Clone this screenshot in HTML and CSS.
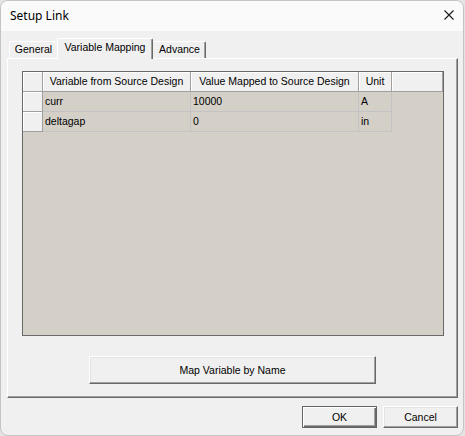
FILE: index.html
```html
<!DOCTYPE html>
<html>
<head>
<meta charset="utf-8">
<title>Setup Link</title>
<link rel="stylesheet" href="styles.css">
</head>
<body>
<div class="window">
  <div class="titlebar">
    <span class="title">Setup Link</span>
    <svg class="close" width="10" height="10" viewBox="0 0 10 10"><path d="M0.5 0.5 L9.5 9.5 M9.5 0.5 L0.5 9.5" stroke="#1a1a1a" stroke-width="1.1" fill="none"/></svg>
  </div>
  <div class="content">
    <div class="tabs">
      <div class="tab tab-general">General</div>
      <div class="tab tab-active">Variable Mapping</div>
      <div class="tab tab-advance">Advance</div>
    </div>
    <div class="panel">
      <div class="grid">
        <div class="row">
          <div class="hcell c0"></div>
          <div class="hcell c1">Variable from Source Design</div>
          <div class="hcell c2">Value Mapped to Source Design</div>
          <div class="hcell c3">Unit</div>
          <div class="hcell c4"></div>
        </div>
        <div class="row">
          <div class="hcell c0"></div>
          <div class="dcell c1">curr</div>
          <div class="dcell c2">10000</div>
          <div class="dcell c3">A</div>
        </div>
        <div class="row">
          <div class="hcell c0"></div>
          <div class="dcell c1">deltagap</div>
          <div class="dcell c2">0</div>
          <div class="dcell c3">in</div>
        </div>
      </div>
      <button class="btn btn-map">Map Variable by Name</button>
    </div>
    <div class="footer">
      <button class="btn btn-default">OK</button>
      <button class="btn">Cancel</button>
    </div>
  </div>
</div>
</body>
</html>
```

FILE: styles.css
```css
html, body {
  margin: 0;
  padding: 0;
  background: #e4e4e4;
}
body {
  font-family: "Liberation Sans", Arial, sans-serif;
  font-size: 10.5px;
  color: #000;
}
.window {
  box-sizing: border-box;
  width: 464px;
  height: 436px;
  border: 1px solid #c4c4c4;
  border-radius: 8px;
  overflow: hidden;
  background: #f0f0f0;
  display: flex;
  flex-direction: column;
}
.titlebar {
  height: 30px;
  flex: none;
  background: #fafafa;
  display: flex;
  align-items: center;
  justify-content: space-between;
  padding: 0 9px 0 9px;
}
.title {
  font-family: "Noto Sans", "Open Sans", sans-serif;
  font-size: 12px;
  color: #000;
  margin-top: -1px;
}
.close {
  margin-top: -2px;
}
.content {
  padding: 0 5px 0 6px;
  display: flex;
  flex-direction: column;
}
.tabs {
  display: flex;
  align-items: flex-end;
  margin-top: 7px;
  margin-left: 2px;
  height: 20px;
  position: relative;
  z-index: 2;
}
.tab {
  box-sizing: border-box;
  height: 17px;
  line-height: 15px;
  text-align: center;
  background: #f0f0f0;
  border-top: 1px solid #fff;
  border-left: 1px solid #fff;
  border-right: 1px solid #696969;
  box-shadow: inset -1px 0 #a0a0a0;
  border-radius: 2px 2px 0 0;
  white-space: nowrap;
}
.tab-general {
  width: 48px;
  border-right: none;
  box-shadow: none;
}
.tab-active {
  width: 96px;
  height: 21px;
  line-height: 16px;
  margin-bottom: -1px;
}
.tab-advance {
  width: 53px;
  border-left: none;
  padding-left: 1px;
}
.panel {
  box-sizing: border-box;
  width: 451px;
  height: 340px;
  border-top: 1px solid #fff;
  border-left: 1px solid #fff;
  border-right: 1px solid #696969;
  border-bottom: 1px solid #696969;
  box-shadow: inset -1px -1px #a0a0a0;
  padding: 12px 0 0 14px;
  display: flex;
  flex-direction: column;
  align-items: flex-start;
}
.grid {
  box-sizing: border-box;
  width: 422px;
  height: 265px;
  border: 1px solid #696969;
  background: #d4d0c8;
}
.row {
  display: flex;
  height: 20px;
}
.hcell, .dcell {
  box-sizing: border-box;
  height: 20px;
  line-height: 19px;
  white-space: nowrap;
  overflow: hidden;
}
.hcell {
  background: #f0f0f0;
  border-right: 1px solid #a0a0a0;
  border-bottom: 1px solid #a0a0a0;
  box-shadow: inset 1px 1px #fff;
  text-align: center;
}
.dcell {
  border-right: 1px solid #c3c3c3;
  border-bottom: 1px solid #c3c3c3;
  padding-left: 2px;
}
.c0 { width: 20px; }
.c1 { width: 148px; }
.c2 { width: 168px; }
.c3 { width: 33px; }
.c4 { width: 51px; }
.btn {
  box-sizing: border-box;
  font-family: "Liberation Sans", Arial, sans-serif;
  font-size: 10.5px;
  color: #000;
  background: #f0f0f0;
  border-top: 1px solid #fff;
  border-left: 1px solid #fff;
  border-right: 1px solid #696969;
  border-bottom: 1px solid #696969;
  box-shadow: inset -1px -1px #a0a0a0, inset 1px 1px #e3e3e3;
  padding: 0;
  margin: 0;
  width: 75px;
  height: 22px;
}
.btn-map {
  width: 287px;
  height: 28px;
  margin-top: 20px;
  margin-left: 67px;
}
.btn-default {
  border: 1px solid #646464;
  box-shadow: inset 1px 1px #fff, inset -1px -1px #696969, inset -2px -2px #a0a0a0;
}
.footer {
  display: flex;
  justify-content: flex-end;
  gap: 6px;
  margin-top: 8px;
  width: 451px;
}
```
